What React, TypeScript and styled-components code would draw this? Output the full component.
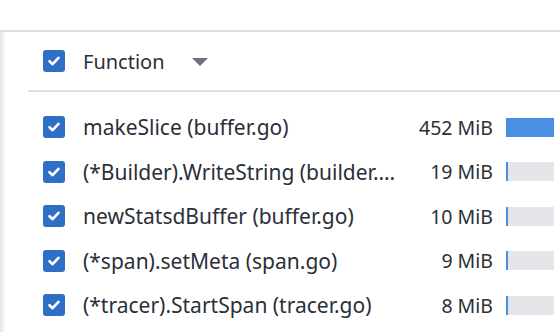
import React from 'react';
import styled, {createGlobalStyle} from 'styled-components';

const GlobalStyle = createGlobalStyle`
    html, body {
        margin: 0;
        padding: 0;
        background: #ffffff;
        font-family: "Noto Sans", "Open Sans", sans-serif;
    }
`;

const colors = {
    text: '#2b2f37',
    border: '#dfdfe3',
    check: '#2f6fc6',
    bar: '#4a90e2',
    track: '#e6e6ea',
    caret: '#6c717a',
};

const rows = [
    {name: 'makeSlice (buffer.go)', value: '452 MiB', pct: 100},
    {name: '(*Builder).WriteString (builder.go)', value: '19 MiB', pct: 4.2},
    {name: 'newStatsdBuffer (buffer.go)', value: '10 MiB', pct: 2.2},
    {name: '(*span).setMeta (span.go)', value: '9 MiB', pct: 2},
    {name: '(*tracer).StartSpan (tracer.go)', value: '8 MiB', pct: 1.8},
];

const Page = styled.div`
    width: 560px;
    height: 332px;
    overflow: hidden;
    padding-top: 30px;
    box-sizing: border-box;
`;

const Panel = styled.div`
    border-top: 2px solid ${colors.border};
    height: 300px;
    background: linear-gradient(to right, #e4e4e6 0px, #f3f3f4 3px, #ffffff 6px);
`;

const Inner = styled.div`
    margin-left: 28px;
`;

const Header = styled.div`
    display: flex;
    align-items: center;
    height: 58px;
    padding-left: 15px;
    border-bottom: 2px solid ${colors.border};
`;

const HeaderLabel = styled.span`
    margin-left: 18px;
    font-size: 20px;
    color: ${colors.text};
`;

const Caret = styled.span`
    margin-left: 27px;
    margin-top: 2px;
    width: 0;
    height: 0;
    border-left: 8px solid transparent;
    border-right: 8px solid transparent;
    border-top: 8px solid ${colors.caret};
`;

const List = styled.div`
    padding-top: 13px;
`;

const Row = styled.div`
    display: flex;
    align-items: center;
    height: 44.5px;
    padding-left: 15px;
    padding-right: 6px;
`;

const Box = styled.span`
    flex: none;
    width: 22px;
    height: 22px;
    border-radius: 3px;
    background: ${colors.check};
    display: flex;
    align-items: center;
    justify-content: center;
`;

const Name = styled.span`
    flex: 1;
    min-width: 0;
    margin-left: 18px;
    margin-right: 4px;
    font-size: 21px;
    color: ${colors.text};
    white-space: nowrap;
    overflow: hidden;
    text-overflow: ellipsis;
`;

const Value = styled.span`
    flex: none;
    width: 92px;
    text-align: right;
    font-size: 19.5px;
    color: ${colors.text};
    margin-right: 13px;
`;

const Track = styled.div`
    flex: none;
    width: 48px;
    height: 19px;
    background: ${colors.track};
    display: flex;
`;

const Fill = styled.div`
    height: 100%;
    min-width: 2px;
    background: ${colors.bar};
`;

const Check = () => (
    <svg width="14" height="14" viewBox="0 0 14 14">
        <path d="M2.5 7.2 L5.6 10.2 L11.5 3.8" fill="none" stroke="#fff" strokeWidth="2.6"
              strokeLinecap="round" strokeLinejoin="round"/>
    </svg>
);

const App: React.FC = () => (
    <Page>
        <GlobalStyle/>
        <Panel>
            <Inner>
                <Header>
                    <Box><Check/></Box>
                    <HeaderLabel>Function</HeaderLabel>
                    <Caret/>
                </Header>
                <List>
                    {rows.map(r => (
                        <Row key={r.name}>
                            <Box><Check/></Box>
                            <Name>{r.name}</Name>
                            <Value>{r.value}</Value>
                            <Track>
                                <Fill style={{width: `${r.pct}%`}}/>
                            </Track>
                        </Row>
                    ))}
                </List>
            </Inner>
        </Panel>
    </Page>
);

export default App;
